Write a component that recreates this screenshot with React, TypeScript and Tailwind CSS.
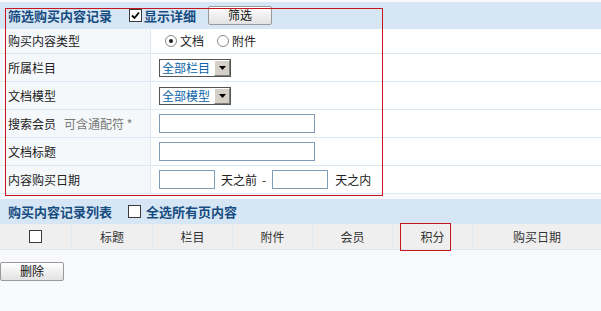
import React from "react";

const font = { fontFamily: '"Noto Sans CJK SC", "DejaVu Sans", sans-serif' };

function Check({ checked = false }: { checked?: boolean }) {
  return (
    <span className="inline-flex w-[13px] h-[13px] border border-[#3a3a3a] bg-white items-center justify-center shrink-0">
      {checked && (
        <svg width="9" height="9" viewBox="0 0 9 9">
          <path d="M1 4.5 L3.5 7 L8 1.5" stroke="#000" strokeWidth="1.8" fill="none" />
        </svg>
      )}
    </span>
  );
}

function Radio({ checked = false }: { checked?: boolean }) {
  return (
    <span className="inline-flex w-[12px] h-[12px] rounded-full border border-[#8a8a8a] bg-white items-center justify-center shrink-0">
      {checked && <span className="w-[4px] h-[4px] rounded-full bg-[#222]" />}
    </span>
  );
}

function Select({ label }: { label: string }) {
  return (
    <div className="flex items-center h-[18px] w-[72px] border border-[#555] bg-white">
      <span className="flex-1 pl-[2px] text-[12px] leading-none text-[#0a64a8]">{label}</span>
      <span className="w-[16px] h-[16px] bg-[#d4d0c8] border border-[#ffffff] border-r-[#808080] border-b-[#808080] flex items-center justify-center">
        <svg width="7" height="4" viewBox="0 0 7 4">
          <path d="M0 0 H7 L3.5 4 Z" fill="#000" />
        </svg>
      </span>
    </div>
  );
}

function Input({ w }: { w: string }) {
  return <div className={`h-[19px] border border-[#7f9db9] bg-white ${w}`} />;
}

function Row({ label, children, h = "h-[28px]" }: { label: React.ReactNode; children?: React.ReactNode; h?: string }) {
  return (
    <div className={`flex ${h} border-b border-[#dbe7f2]`}>
      <div className="w-[151px] shrink-0 bg-[#f5f8fb] border-r border-[#dbe7f2] flex items-center pl-[8px] text-[12px] text-[#222]">
        {label}
      </div>
      <div className="flex-1 bg-white flex items-center pl-[8px] text-[12px] text-[#222]">{children}</div>
    </div>
  );
}

export default function App() {
  const cols = [
    { w: "w-[72px]", t: null },
    { w: "w-[81px]", t: "标题" },
    { w: "w-[80px]", t: "栏目" },
    { w: "w-[80px]", t: "附件" },
    { w: "w-[80px]", t: "会员" },
    { w: "w-[80px]", t: "积分" },
    { w: "flex-1", t: "购买日期" },
  ];
  return (
    <div className="relative w-[601px] h-[311px] bg-[#f8f9fd] overflow-hidden" style={font}>
      <div className="pt-[2px]">
        <div className="h-[27px] bg-[#d6e6f5] flex items-center pl-[8px] text-[13px] font-bold text-[#164c80]">
          <span>筛选购买内容记录</span>
          <span className="ml-[17px] mr-[2px] flex"><Check checked /></span>
          <span>显示详细</span>
          <button className="ml-[12px] w-[64px] h-[19px] mt-[-1px] border border-[#9a9a9a] rounded-[2px] bg-gradient-to-b from-white to-[#e2e2e2] text-[12px] font-normal text-[#111] leading-none">
            筛选
          </button>
        </div>
        <Row label="购买内容类型" h="h-[25px]">
          <div className="flex items-center pl-[6px]">
            <Radio checked />
            <span className="ml-[3px]">文档</span>
            <span className="ml-[13px] flex"><Radio /></span>
            <span className="ml-[3px]">附件</span>
          </div>
        </Row>
        <Row label="所属栏目">
          <Select label="全部栏目" />
        </Row>
        <Row label="文档模型">
          <Select label="全部模型" />
        </Row>
        <Row
          label={
            <>
              <span>搜索会员</span>
              <span className="ml-[8px] text-[#777]">可含通配符 *</span>
            </>
          }
        >
          <Input w="w-[156px]" />
        </Row>
        <Row label="文档标题">
          <Input w="w-[156px]" />
        </Row>
        <Row label="内容购买日期">
          <Input w="w-[56px]" />
          <span className="ml-[6px]">天之前</span>
          <span className="ml-[5px]">-</span>
          <span className="ml-[6px] flex"><Input w="w-[56px]" /></span>
          <span className="ml-[7px]">天之内</span>
        </Row>
      </div>
      <div className="mt-[5px] h-[25px] bg-[#d6e6f5] flex items-center pl-[8px] text-[13px] font-bold text-[#164c80]">
        <span>购买内容记录列表</span>
        <span className="ml-[16px] mr-[5px] flex"><Check /></span>
        <span>全选所有页内容</span>
      </div>
      <div className="flex h-[26px] bg-[#efefef] border-b border-[#dde8f1]">
        {cols.map((c, i) => (
          <div
            key={i}
            className={`${c.w} ${i < cols.length - 1 ? "border-r border-[#e2eaf1]" : ""} flex items-center justify-center text-[12px] text-[#333]`}
          >
            {c.t === null ? <Check /> : c.t}
          </div>
        ))}
      </div>
      <div className="pt-[7px]">
        <button className="w-[64px] h-[19px] border border-[#9a9a9a] rounded-[2px] bg-gradient-to-b from-white to-[#e2e2e2] text-[12px] text-[#111] leading-none">
          删除
        </button>
      </div>
      <div className="absolute left-[5px] top-[8px] w-[378px] h-[188px] border border-[#c4161c] pointer-events-none" />
      <div className="absolute left-[400px] top-[223px] w-[51px] h-[28px] border-[1.5px] border-[#c4161c] pointer-events-none" />
    </div>
  );
}
